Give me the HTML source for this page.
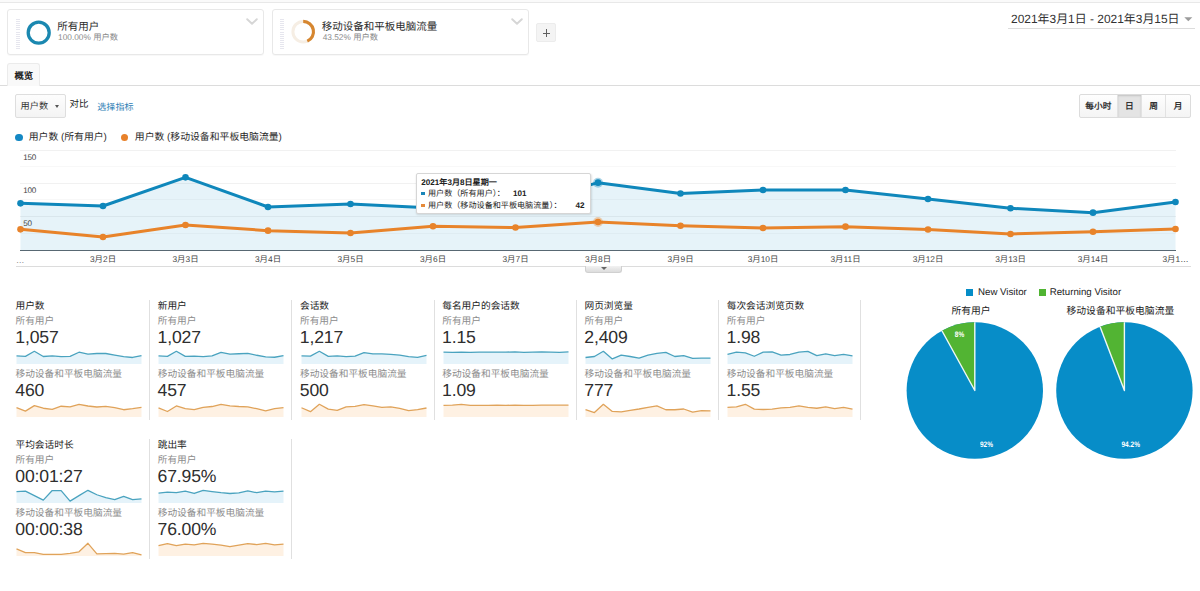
<!DOCTYPE html>
<html lang="zh-CN">
<head>
<meta charset="utf-8">
<title>Analytics</title>
<style>
*{box-sizing:border-box;margin:0;padding:0}
html,body{width:1200px;height:591px;overflow:hidden;background:#fff}
body{font-family:"Liberation Sans",sans-serif;color:#222;position:relative;font-size:10px;text-rendering:geometricPrecision}
.abs{position:absolute}
.topbar{position:absolute;left:0;top:0;width:1200px;height:3px;background:#fafafa;border-bottom:1px solid #e8e8e8}
.seg{position:absolute;top:9.3px;height:46px;width:256.5px;border:1px solid #e8e8e8;border-radius:3px;background:#fff;box-shadow:0 1px 1px rgba(0,0,0,0.03)}
.grip{position:absolute;left:7.3px;top:8.4px;width:4px;height:30px;background:repeating-linear-gradient(to bottom,#e6e6ee 0,#e6e6ee 1px,#fff 1px,#fff 2.1px)}
.seg .t{position:absolute;left:48.8px;top:10.9px;font-size:10.5px;line-height:12px;color:#2a2a2a;white-space:nowrap}
.seg .s{position:absolute;left:49.7px;top:22px;font-size:8.3px;line-height:10px;color:#8a8a8a;white-space:nowrap}
.chev{position:absolute;right:5px;top:7.8px}
.plus{position:absolute;left:536.2px;top:23.1px;width:19.8px;height:19.3px;border:1px solid #ececec;border-radius:2px;background:#f4f4f4}
.plus:before{content:"";position:absolute;left:5.6px;top:8.5px;width:7.6px;height:1.2px;background:#606060}
.plus:after{content:"";position:absolute;left:8.8px;top:5.3px;width:1.2px;height:7.6px;background:#606060}
.date{position:absolute;left:1007.5px;top:11px;width:187px;height:18.2px;border-bottom:1px solid #dcdcdc;font-size:11.95px;line-height:17px;color:#333;white-space:nowrap;padding-left:3.5px}
.tri{position:absolute;width:0;height:0;border-left:3.6px solid transparent;border-right:3.6px solid transparent;border-top:4px solid #999}
.tabline{position:absolute;left:0;top:85px;width:1200px;height:1.3px;background:#dcdcdc}
.tab{position:absolute;left:7.2px;top:63.3px;width:33px;height:23.2px;border:1px solid #ebebeb;border-bottom:none;border-radius:3px 3px 0 0;background:#f9f9f9;font-size:9.3px;font-weight:bold;line-height:25px;text-align:center;color:#222}
.btn{position:absolute;left:15px;top:94px;width:50.6px;height:24.4px;border:1px solid #dedede;border-radius:2px;background:linear-gradient(#fdfdfd,#f4f4f4);font-size:9.2px;line-height:23px;color:#333;padding-left:4.6px;white-space:nowrap}
.cmp{position:absolute;left:69.6px;top:99.1px;font-size:9.5px;line-height:12px;color:#222}
.sel{position:absolute;left:97.3px;top:100.5px;font-size:9.05px;line-height:12px;color:#2f80b5}
.bg{position:absolute;left:1079px;top:94px;height:24px;width:112px;border:1px solid #dcdcdc;border-radius:2px;background:linear-gradient(#fefefe,#f4f4f4);display:flex;font-size:8.7px;font-weight:bold;color:#333;line-height:23.2px;text-align:center;overflow:hidden}
.bg div{border-right:1px solid #e2e2e2;height:100%}
.bg div:last-child{border-right:none}
.lg{position:absolute;top:132px;font-size:9.85px;line-height:12px;color:#2a2a2a;white-space:nowrap}
.dot{position:absolute;top:133.6px;width:7.5px;height:7.5px;border-radius:50%}
.yl{position:absolute;left:23.2px;font-size:8.1px;line-height:10px;color:#444;letter-spacing:-0.2px}
.xl{position:absolute;top:254px;width:60px;text-align:center;font-size:8.4px;line-height:10px;color:#444;white-space:nowrap}
.botline{position:absolute;left:16px;top:266px;width:1175px;height:1px;background:#dcdcdc}
.handle{position:absolute;left:584.7px;top:266px;width:37px;height:6.5px;background:linear-gradient(#f2f2f2,#dcdcdc);border:1px solid #d0d0d0;border-top:none;border-radius:0 0 3px 3px}
.tip{position:absolute;left:415.6px;top:173.3px;width:175px;height:40.6px;background:#fff;border:1px solid #d6d6d6;border-radius:2px;box-shadow:0.5px 1px 2px rgba(0,0,0,0.12);font-size:8.1px;line-height:11px;color:#222;white-space:nowrap}
.tip b{font-weight:bold}
.tip .r{position:absolute}
.sq{position:absolute;width:3.7px;height:3.3px}
.card{position:absolute;width:130px;height:120px}
.card div{position:absolute;left:-0.5px;white-space:nowrap}
.ct{top:0.9px;font-size:9.7px;line-height:12px;color:#222}
.cs{font-size:9.7px;line-height:12px;color:#8c8c8c}
.cv{font-size:17.6px;line-height:20px;color:#2e2e2e;letter-spacing:-0.15px;margin-left:-0.2px}
.vd{position:absolute;width:1px;height:120px;background:#e0e0e0}
.pl{position:absolute;font-size:9.7px;line-height:12px;color:#222;white-space:nowrap}
.pt{position:absolute;top:305.7px;font-size:9.8px;line-height:12px;color:#222;white-space:nowrap;text-align:center;width:140px}
.pp{position:absolute;font-size:6.5px;line-height:8px;color:#fff;font-weight:bold;white-space:nowrap;transform:scaleY(1.22);transform-origin:50% 60%}
</style>
</head>
<body>
<div class="topbar"></div>

<div class="seg" style="left:7.4px">
  <div class="grip"></div>
  <svg class="abs" style="left:16.8px;top:8.3px" width="28" height="28" viewBox="0 0 28 28"><circle cx="13.7" cy="13.7" r="10.5" fill="none" stroke="#1b88b0" stroke-width="3.3"/></svg>
  <div class="t">所有用户</div><div class="s">100.00% 用户数</div>
  <svg class="chev" width="12" height="8" viewBox="0 0 12 8"><path d="M1.2,1.2 L6,5.8 L10.8,1.2" fill="none" stroke="#d6d6d6" stroke-width="1.9" stroke-linejoin="round" stroke-linecap="round"/></svg>
</div>
<div class="seg" style="left:272px">
  <div class="grip"></div>
  <svg class="abs" style="left:17.3px;top:8.2px" width="28" height="28" viewBox="0 0 28 28"><circle cx="13.2" cy="13.7" r="10.3" fill="none" stroke="#f6eee4" stroke-width="3"/><path d="M13.2,3.4 A10.3,10.3 0 0 1 17.3,23.15" fill="none" stroke="#d6862f" stroke-width="3.1"/></svg>
  <div class="t">移动设备和平板电脑流量</div><div class="s">43.52% 用户数</div>
  <svg class="chev" width="12" height="8" viewBox="0 0 12 8"><path d="M1.2,1.2 L6,5.8 L10.8,1.2" fill="none" stroke="#d6d6d6" stroke-width="1.9" stroke-linejoin="round" stroke-linecap="round"/></svg>
</div>
<div class="plus"></div>

<div class="date">2021年3月1日 - 2021年3月15日</div>
<svg class="abs" style="left:1180px;top:14px" width="16" height="10" viewBox="1180 14 16 10"><path d="M1184.3,17.3 L1192.3,17.3 L1188.3,21.2 Z" fill="#9c9c9c"/></svg>

<div class="tabline"></div>
<div class="tab">概览</div>

<div class="btn">用户数</div>
<div class="tri" style="left:55.3px;top:105.2px;border-left-width:2.6px;border-right-width:2.6px;border-top:3px solid #555"></div>
<div class="cmp">对比</div>
<div class="sel">选择指标</div>

<div class="bg"><div style="width:38px">每小时</div><div style="width:24.5px;background:#e4e4e4;box-shadow:inset 0 1px 2px rgba(0,0,0,0.15)">日</div><div style="width:24.5px">周</div><div style="width:24px">月</div></div>

<div class="dot" style="left:15.1px;background:#1488c4"></div><div class="lg" style="left:28.7px">用户数 (所有用户)</div>
<div class="dot" style="left:120.6px;background:#e8812a"></div><div class="lg" style="left:134.8px">用户数 (移动设备和平板电脑流量)</div>

<svg class="abs" style="left:0;top:140px" width="1200" height="140" viewBox="0 140 1200 140">
<g stroke="#f1f1f1" stroke-width="1" shape-rendering="crispEdges">
<line x1="20" y1="150.5" x2="1176" y2="150.5"/><line x1="20" y1="183.5" x2="1176" y2="183.5"/><line x1="20" y1="216.5" x2="1176" y2="216.5"/>
</g>
<g stroke="#f8f8f8" stroke-width="1" shape-rendering="crispEdges">
<line x1="20" y1="166.5" x2="1176" y2="166.5"/><line x1="20" y1="199.5" x2="1176" y2="199.5"/><line x1="20" y1="233.5" x2="1176" y2="233.5"/>
</g>
<path d="M20.5,250 L20.5,203.33 L103,206 L185.5,177.33 L268,207 L350.5,204 L433,208 L515.5,206 L598,182.67 L680.5,193.5 L763,190 L845.5,190 L928,199 L1010.5,208.27 L1093,212.67 L1175.5,202 L1175.5,250 Z" fill="#058dc7" fill-opacity="0.1"/>
<line x1="20" y1="250.5" x2="1176" y2="250.5" stroke="#586873" stroke-width="1" shape-rendering="crispEdges"/>
<polyline points="20.5,203.33 103,206 185.5,177.33 268,207 350.5,204 433,208 515.5,206 598,182.67 680.5,193.5 763,190 845.5,190 928,199 1010.5,208.27 1093,212.67 1175.5,202" fill="none" stroke="#0f87bb" stroke-width="3" stroke-linejoin="round" stroke-linecap="round"/>
<circle cx="20.5" cy="203.33" r="3.3" fill="#0f87bb"/><circle cx="103" cy="206" r="3.3" fill="#0f87bb"/><circle cx="185.5" cy="177.33" r="3.3" fill="#0f87bb"/><circle cx="268" cy="207" r="3.3" fill="#0f87bb"/><circle cx="350.5" cy="204" r="3.3" fill="#0f87bb"/><circle cx="433" cy="208" r="3.3" fill="#0f87bb"/><circle cx="515.5" cy="206" r="3.3" fill="#0f87bb"/><circle cx="598" cy="182.67" r="5" fill="#0f87bb" fill-opacity="0.35"/><circle cx="598" cy="182.67" r="3.3" fill="#0f87bb"/><circle cx="680.5" cy="193.5" r="3.3" fill="#0f87bb"/><circle cx="763" cy="190" r="3.3" fill="#0f87bb"/><circle cx="845.5" cy="190" r="3.3" fill="#0f87bb"/><circle cx="928" cy="199" r="3.3" fill="#0f87bb"/><circle cx="1010.5" cy="208.27" r="3.3" fill="#0f87bb"/><circle cx="1093" cy="212.67" r="3.3" fill="#0f87bb"/><circle cx="1175.5" cy="202" r="3.3" fill="#0f87bb"/>
<polyline points="20.5,229.33 103,237 185.5,225 268,230.67 350.5,233 433,226.27 515.5,227.5 598,222 680.5,225.73 763,228 845.5,226.67 928,229.5 1010.5,234 1093,231.73 1175.5,229" fill="none" stroke="#e8832a" stroke-width="3" stroke-linejoin="round" stroke-linecap="round"/>
<circle cx="20.5" cy="229.33" r="3.3" fill="#e8832a"/><circle cx="103" cy="237" r="3.3" fill="#e8832a"/><circle cx="185.5" cy="225" r="3.3" fill="#e8832a"/><circle cx="268" cy="230.67" r="3.3" fill="#e8832a"/><circle cx="350.5" cy="233" r="3.3" fill="#e8832a"/><circle cx="433" cy="226.27" r="3.3" fill="#e8832a"/><circle cx="515.5" cy="227.5" r="3.3" fill="#e8832a"/><circle cx="598" cy="222" r="5" fill="#e8832a" fill-opacity="0.35"/><circle cx="598" cy="222" r="3.3" fill="#e8832a"/><circle cx="680.5" cy="225.73" r="3.3" fill="#e8832a"/><circle cx="763" cy="228" r="3.3" fill="#e8832a"/><circle cx="845.5" cy="226.67" r="3.3" fill="#e8832a"/><circle cx="928" cy="229.5" r="3.3" fill="#e8832a"/><circle cx="1010.5" cy="234" r="3.3" fill="#e8832a"/><circle cx="1093" cy="231.73" r="3.3" fill="#e8832a"/><circle cx="1175.5" cy="229" r="3.3" fill="#e8832a"/>
</svg>
<div class="yl" style="top:152.6px">150</div>
<div class="yl" style="top:186px">100</div>
<div class="yl" style="top:219.4px">50</div>
<div class="xl" style="left:16px;width:auto;top:255px;color:#888">…</div>
<div class="xl" style="left:73px">3月2日</div><div class="xl" style="left:155.5px">3月3日</div><div class="xl" style="left:238px">3月4日</div><div class="xl" style="left:320.5px">3月5日</div><div class="xl" style="left:403px">3月6日</div><div class="xl" style="left:485.5px">3月7日</div><div class="xl" style="left:568px">3月8日</div><div class="xl" style="left:650.5px">3月9日</div><div class="xl" style="left:733px">3月10日</div><div class="xl" style="left:815.5px">3月11日</div><div class="xl" style="left:898px">3月12日</div><div class="xl" style="left:980.5px">3月13日</div><div class="xl" style="left:1063px">3月14日</div><div class="xl" style="left:1145.5px">3月1…</div>
<div class="botline"></div>
<div class="handle"></div>
<div class="tri" style="left:600.7px;top:267.3px;border-left-width:3px;border-right-width:3px;border-top:3px solid #666"></div>

<div class="tip">
  <div class="r" style="left:4.7px;top:2.9px"><b>2021年3月8日星期一</b></div>
  <div class="sq" style="left:4.3px;top:17.5px;background:#1a86b8"></div>
  <div class="r" style="left:11.4px;top:13.4px">用户数（所有用户）：</div>
  <div class="r" style="left:96.4px;top:13.4px"><b>101</b></div>
  <div class="sq" style="left:4.3px;top:29.8px;background:#e58a3a"></div>
  <div class="r" style="left:11.4px;top:25.5px">用户数（移动设备和平板电脑流量）：</div>
  <div class="r" style="left:158.9px;top:25.5px"><b>42</b></div>
</div>

<div class="card" style="left:16px;top:300px"><div class="ct">用户数</div><div class="cs" style="top:15.9px">所有用户</div><div class="cv" style="top:26.5px">1,057</div><svg class="abs" style="left:0;top:48px" width="127" height="17" viewBox="0 48 127 17"><path d="M0.5,64 L0.5,55.84 L9.43,56.31 L18.36,51.3 L27.29,56.48 L36.21,55.96 L45.14,56.66 L54.07,56.31 L63,52.23 L71.93,54.13 L80.86,53.51 L89.79,53.51 L98.71,55.09 L107.64,56.71 L116.57,57.48 L125.5,55.61 L125.5,64 Z" fill="#e5f3fa"/><polyline points="0.5,55.84 9.43,56.31 18.36,51.3 27.29,56.48 36.21,55.96 45.14,56.66 54.07,56.31 63,52.23 71.93,54.13 80.86,53.51 89.79,53.51 98.71,55.09 107.64,56.71 116.57,57.48 125.5,55.61" fill="none" stroke="#4aa3bf" stroke-width="1.3" stroke-linejoin="round"/></svg><div class="cs" style="top:69px">移动设备和平板电脑流量</div><div class="cv" style="top:79.5px">460</div><svg class="abs" style="left:0;top:101px" width="127" height="17" viewBox="0 101 127 17"><path d="M0.5,117 L0.5,107.63 L9.43,111.1 L18.36,105.66 L27.29,108.23 L36.21,109.29 L45.14,106.24 L54.07,106.79 L63,104.3 L71.93,105.99 L80.86,107.02 L89.79,106.42 L98.71,107.7 L107.64,109.74 L116.57,108.71 L125.5,107.47 L125.5,117 Z" fill="#fef1e3"/><polyline points="0.5,107.63 9.43,111.1 18.36,105.66 27.29,108.23 36.21,109.29 45.14,106.24 54.07,106.79 63,104.3 71.93,105.99 80.86,107.02 89.79,106.42 98.71,107.7 107.64,109.74 116.57,108.71 125.5,107.47" fill="none" stroke="#e0a35a" stroke-width="1.3" stroke-linejoin="round"/></svg></div><div class="vd" style="left:149.1px;top:300px"></div><div class="card" style="left:158.25px;top:300px"><div class="ct">新用户</div><div class="cs" style="top:15.9px">所有用户</div><div class="cv" style="top:26.5px">1,027</div><svg class="abs" style="left:0;top:48px" width="127" height="17" viewBox="0 48 127 17"><path d="M0.5,64 L0.5,55.84 L9.43,56.31 L18.36,51.3 L27.29,56.31 L36.21,56.08 L45.14,56.66 L54.07,55.84 L63,52.35 L71.93,54.1 L80.86,53.75 L89.79,53.28 L98.71,55.26 L107.64,56.78 L116.57,57.24 L125.5,55.61 L125.5,64 Z" fill="#e5f3fa"/><polyline points="0.5,55.84 9.43,56.31 18.36,51.3 27.29,56.31 36.21,56.08 45.14,56.66 54.07,55.84 63,52.35 71.93,54.1 80.86,53.75 89.79,53.28 98.71,55.26 107.64,56.78 116.57,57.24 125.5,55.61" fill="none" stroke="#4aa3bf" stroke-width="1.3" stroke-linejoin="round"/></svg><div class="cs" style="top:69px">移动设备和平板电脑流量</div><div class="cv" style="top:79.5px">457</div><svg class="abs" style="left:0;top:101px" width="127" height="17" viewBox="0 101 127 17"><path d="M0.5,117 L0.5,107.89 L9.43,111.48 L18.36,105.96 L27.29,108.72 L36.21,109.55 L45.14,107.34 L54.07,106.51 L63,104.3 L71.93,105.96 L80.86,106.51 L89.79,106.78 L98.71,108.72 L107.64,110.93 L116.57,108.72 L125.5,107.61 L125.5,117 Z" fill="#fef1e3"/><polyline points="0.5,107.89 9.43,111.48 18.36,105.96 27.29,108.72 36.21,109.55 45.14,107.34 54.07,106.51 63,104.3 71.93,105.96 80.86,106.51 89.79,106.78 98.71,108.72 107.64,110.93 116.57,108.72 125.5,107.61" fill="none" stroke="#e0a35a" stroke-width="1.3" stroke-linejoin="round"/></svg></div><div class="vd" style="left:291.35px;top:300px"></div><div class="card" style="left:300.5px;top:300px"><div class="ct">会话数</div><div class="cs" style="top:15.9px">所有用户</div><div class="cv" style="top:26.5px">1,217</div><svg class="abs" style="left:0;top:48px" width="127" height="17" viewBox="0 48 127 17"><path d="M0.5,64 L0.5,55.87 L9.43,56.08 L18.36,51.3 L27.29,56.38 L36.21,55.87 L45.14,56.68 L54.07,56.08 L63,52.62 L71.93,53.84 L80.86,53.84 L89.79,54.35 L98.71,55.06 L107.64,56.68 L116.57,57.4 L125.5,55.36 L125.5,64 Z" fill="#e5f3fa"/><polyline points="0.5,55.87 9.43,56.08 18.36,51.3 27.29,56.38 36.21,55.87 45.14,56.68 54.07,56.08 63,52.62 71.93,53.84 80.86,53.84 89.79,54.35 98.71,55.06 107.64,56.68 116.57,57.4 125.5,55.36" fill="none" stroke="#4aa3bf" stroke-width="1.3" stroke-linejoin="round"/></svg><div class="cs" style="top:69px">移动设备和平板电脑流量</div><div class="cv" style="top:79.5px">500</div><svg class="abs" style="left:0;top:101px" width="127" height="17" viewBox="0 101 127 17"><path d="M0.5,117 L0.5,107.74 L9.43,111.71 L18.36,104.3 L27.29,109.06 L36.21,110.39 L45.14,106.95 L54.07,106.42 L63,104.56 L71.93,105.89 L80.86,107.47 L89.79,106.95 L98.71,108.27 L107.64,110.65 L116.57,109.59 L125.5,108 L125.5,117 Z" fill="#fef1e3"/><polyline points="0.5,107.74 9.43,111.71 18.36,104.3 27.29,109.06 36.21,110.39 45.14,106.95 54.07,106.42 63,104.56 71.93,105.89 80.86,107.47 89.79,106.95 98.71,108.27 107.64,110.65 116.57,109.59 125.5,108" fill="none" stroke="#e0a35a" stroke-width="1.3" stroke-linejoin="round"/></svg></div><div class="vd" style="left:433.6px;top:300px"></div><div class="card" style="left:442.75px;top:300px"><div class="ct">每名用户的会话数</div><div class="cs" style="top:15.9px">所有用户</div><div class="cv" style="top:26.5px">1.15</div><svg class="abs" style="left:0;top:48px" width="127" height="17" viewBox="0 48 127 17"><path d="M0.5,64 L0.5,52.06 L9.43,52.32 L18.36,52.19 L27.29,52.32 L36.21,52.19 L45.14,52.06 L54.07,52.19 L63,52.06 L71.93,51.94 L80.86,52.32 L89.79,52.06 L98.71,51.94 L107.64,52.19 L116.57,52.32 L125.5,51.81 L125.5,64 Z" fill="#e5f3fa"/><polyline points="0.5,52.06 9.43,52.32 18.36,52.19 27.29,52.32 36.21,52.19 45.14,52.06 54.07,52.19 63,52.06 71.93,51.94 80.86,52.32 89.79,52.06 98.71,51.94 107.64,52.19 116.57,52.32 125.5,51.81" fill="none" stroke="#4aa3bf" stroke-width="1.3" stroke-linejoin="round"/></svg><div class="cs" style="top:69px">移动设备和平板电脑流量</div><div class="cv" style="top:79.5px">1.09</div><svg class="abs" style="left:0;top:101px" width="127" height="17" viewBox="0 101 127 17"><path d="M0.5,117 L0.5,105.32 L9.43,105.19 L18.36,104.3 L27.29,105.32 L36.21,105.32 L45.14,105.32 L54.07,105.19 L63,105.32 L71.93,105.19 L80.86,105.32 L89.79,105.44 L98.71,105.06 L107.64,105.19 L116.57,105.19 L125.5,105.06 L125.5,117 Z" fill="#fef1e3"/><polyline points="0.5,105.32 9.43,105.19 18.36,104.3 27.29,105.32 36.21,105.32 45.14,105.32 54.07,105.19 63,105.32 71.93,105.19 80.86,105.32 89.79,105.44 98.71,105.06 107.64,105.19 116.57,105.19 125.5,105.06" fill="none" stroke="#e0a35a" stroke-width="1.3" stroke-linejoin="round"/></svg></div><div class="vd" style="left:575.85px;top:300px"></div><div class="card" style="left:585px;top:300px"><div class="ct">网页浏览量</div><div class="cs" style="top:15.9px">所有用户</div><div class="cv" style="top:26.5px">2,409</div><svg class="abs" style="left:0;top:48px" width="127" height="17" viewBox="0 48 127 17"><path d="M0.5,64 L0.5,57.52 L9.43,56.51 L18.36,51.3 L27.29,58.92 L36.21,55.11 L45.14,56.51 L54.07,58.16 L63,55.11 L71.93,53.46 L80.86,52.32 L89.79,56.51 L98.71,55.62 L107.64,58.41 L116.57,58.16 L125.5,58.03 L125.5,64 Z" fill="#e5f3fa"/><polyline points="0.5,57.52 9.43,56.51 18.36,51.3 27.29,58.92 36.21,55.11 45.14,56.51 54.07,58.16 63,55.11 71.93,53.46 80.86,52.32 89.79,56.51 98.71,55.62 107.64,58.41 116.57,58.16 125.5,58.03" fill="none" stroke="#4aa3bf" stroke-width="1.3" stroke-linejoin="round"/></svg><div class="cs" style="top:69px">移动设备和平板电脑流量</div><div class="cv" style="top:79.5px">777</div><svg class="abs" style="left:0;top:101px" width="127" height="17" viewBox="0 101 127 17"><path d="M0.5,117 L0.5,109.51 L9.43,112.56 L18.36,104.3 L27.29,111.41 L36.21,111.92 L45.14,110.27 L54.07,109 L63,107.35 L71.93,105.95 L80.86,109.76 L89.79,109.76 L98.71,109 L107.64,112.17 L116.57,110.65 L125.5,110.9 L125.5,117 Z" fill="#fef1e3"/><polyline points="0.5,109.51 9.43,112.56 18.36,104.3 27.29,111.41 36.21,111.92 45.14,110.27 54.07,109 63,107.35 71.93,105.95 80.86,109.76 89.79,109.76 98.71,109 107.64,112.17 116.57,110.65 125.5,110.9" fill="none" stroke="#e0a35a" stroke-width="1.3" stroke-linejoin="round"/></svg></div><div class="vd" style="left:718.1px;top:300px"></div><div class="card" style="left:727.25px;top:300px"><div class="ct">每次会话浏览页数</div><div class="cs" style="top:15.9px">所有用户</div><div class="cv" style="top:26.5px">1.98</div><svg class="abs" style="left:0;top:48px" width="127" height="17" viewBox="0 48 127 17"><path d="M0.5,64 L0.5,54.48 L9.43,52.19 L18.36,52.89 L27.29,56.25 L36.21,52.19 L45.14,51.81 L54.07,55.11 L63,54.48 L71.93,52.19 L80.86,51.3 L89.79,55.62 L98.71,53.97 L107.64,55.62 L116.57,54.48 L125.5,55.87 L125.5,64 Z" fill="#e5f3fa"/><polyline points="0.5,54.48 9.43,52.19 18.36,52.89 27.29,56.25 36.21,52.19 45.14,51.81 54.07,55.11 63,54.48 71.93,52.19 80.86,51.3 89.79,55.62 98.71,53.97 107.64,55.62 116.57,54.48 125.5,55.87" fill="none" stroke="#4aa3bf" stroke-width="1.3" stroke-linejoin="round"/></svg><div class="cs" style="top:69px">移动设备和平板电脑流量</div><div class="cv" style="top:79.5px">1.55</div><svg class="abs" style="left:0;top:101px" width="127" height="17" viewBox="0 101 127 17"><path d="M0.5,117 L0.5,107.35 L9.43,106.97 L18.36,104.3 L27.29,109.13 L36.21,109.51 L45.14,109.13 L54.07,107.86 L63,107.35 L71.93,105.82 L80.86,107.35 L89.79,108.24 L98.71,106.97 L107.64,108.62 L116.57,107.35 L125.5,109.13 L125.5,117 Z" fill="#fef1e3"/><polyline points="0.5,107.35 9.43,106.97 18.36,104.3 27.29,109.13 36.21,109.51 45.14,109.13 54.07,107.86 63,107.35 71.93,105.82 80.86,107.35 89.79,108.24 98.71,106.97 107.64,108.62 116.57,107.35 125.5,109.13" fill="none" stroke="#e0a35a" stroke-width="1.3" stroke-linejoin="round"/></svg></div><div class="vd" style="left:860.35px;top:300px"></div><div class="card" style="left:16px;top:439px"><div class="ct">平均会话时长</div><div class="cs" style="top:15.9px">所有用户</div><div class="cv" style="top:26.5px">00:01:27</div><svg class="abs" style="left:0;top:48px" width="127" height="17" viewBox="0 48 127 17"><path d="M0.5,64 L0.5,52.57 L9.43,52.06 L18.36,56.63 L27.29,61.08 L36.21,51.55 L45.14,51.55 L54.07,62.09 L63,56.63 L71.93,51.3 L80.86,55.75 L89.79,58.67 L98.71,60.57 L107.64,57.4 L116.57,60.57 L125.5,59.81 L125.5,64 Z" fill="#e5f3fa"/><polyline points="0.5,52.57 9.43,52.06 18.36,56.63 27.29,61.08 36.21,51.55 45.14,51.55 54.07,62.09 63,56.63 71.93,51.3 80.86,55.75 89.79,58.67 98.71,60.57 107.64,57.4 116.57,60.57 125.5,59.81" fill="none" stroke="#4aa3bf" stroke-width="1.3" stroke-linejoin="round"/></svg><div class="cs" style="top:69px">移动设备和平板电脑流量</div><div class="cv" style="top:79.5px">00:00:38</div><svg class="abs" style="left:0;top:101px" width="127" height="17" viewBox="0 101 127 17"><path d="M0.5,117 L0.5,109.89 L9.43,113.57 L18.36,113.57 L27.29,115.35 L36.21,115.35 L45.14,115.35 L54.07,114.33 L63,112.81 L71.93,104.3 L80.86,114.84 L89.79,114.59 L98.71,114.33 L107.64,115.09 L116.57,113.57 L125.5,115.98 L125.5,117 Z" fill="#fef1e3"/><polyline points="0.5,109.89 9.43,113.57 18.36,113.57 27.29,115.35 36.21,115.35 45.14,115.35 54.07,114.33 63,112.81 71.93,104.3 80.86,114.84 89.79,114.59 98.71,114.33 107.64,115.09 116.57,113.57 125.5,115.98" fill="none" stroke="#e0a35a" stroke-width="1.3" stroke-linejoin="round"/></svg></div><div class="vd" style="left:149.1px;top:439px"></div><div class="card" style="left:158.25px;top:439px"><div class="ct">跳出率</div><div class="cs" style="top:15.9px">所有用户</div><div class="cv" style="top:26.5px">67.95%</div><svg class="abs" style="left:0;top:48px" width="127" height="17" viewBox="0 48 127 17"><path d="M0.5,64 L0.5,54.22 L9.43,53.2 L18.36,53.71 L27.29,52.06 L36.21,54.48 L45.14,51.3 L54.07,52.57 L63,53.71 L71.93,54.48 L80.86,53.97 L89.79,51.81 L98.71,53.71 L107.64,52.06 L116.57,52.95 L125.5,52.06 L125.5,64 Z" fill="#e5f3fa"/><polyline points="0.5,54.22 9.43,53.2 18.36,53.71 27.29,52.06 36.21,54.48 45.14,51.3 54.07,52.57 63,53.71 71.93,54.48 80.86,53.97 89.79,51.81 98.71,53.71 107.64,52.06 116.57,52.95 125.5,52.06" fill="none" stroke="#4aa3bf" stroke-width="1.3" stroke-linejoin="round"/></svg><div class="cs" style="top:69px">移动设备和平板电脑流量</div><div class="cv" style="top:79.5px">76.00%</div><svg class="abs" style="left:0;top:101px" width="127" height="17" viewBox="0 101 127 17"><path d="M0.5,117 L0.5,106.71 L9.43,104.55 L18.36,106.71 L27.29,105.06 L36.21,105.82 L45.14,104.3 L54.07,105.06 L63,106.2 L71.93,107.73 L80.86,106.2 L89.79,104.55 L98.71,105.57 L107.64,104.3 L116.57,105.82 L125.5,105.06 L125.5,117 Z" fill="#fef1e3"/><polyline points="0.5,106.71 9.43,104.55 18.36,106.71 27.29,105.06 36.21,105.82 45.14,104.3 54.07,105.06 63,106.2 71.93,107.73 80.86,106.2 89.79,104.55 98.71,105.57 107.64,104.3 116.57,105.82 125.5,105.06" fill="none" stroke="#e0a35a" stroke-width="1.3" stroke-linejoin="round"/></svg></div><div class="vd" style="left:291.35px;top:439px"></div>

<div class="abs" style="left:965.7px;top:289px;width:7.5px;height:7px;background:#058dc7"></div>
<div class="pl" style="left:978px;top:286.5px">New Visitor</div>
<div class="abs" style="left:1038.6px;top:289px;width:7.5px;height:7px;background:#50b432"></div>
<div class="pl" style="left:1049.7px;top:286.5px">Returning Visitor</div>
<div class="pt" style="left:901px">所有用户</div>
<div class="pt" style="left:1050.4px">移动设备和平板电脑流量</div>
<svg class="abs" style="left:890px;top:315px" width="310" height="150" viewBox="890 315 310 150"><circle cx="974.8" cy="390.5" r="68.2" fill="#078dc8"/><path d="M974.8,390.5 L941.94,330.74 A68.2,68.2 0 0 1 974.8,322.3 Z" fill="#52b433"/><path d="M941.94,330.74 L974.8,390.5 L974.8,322.3" fill="none" stroke="#fff" stroke-opacity="0.92" stroke-width="1.4" stroke-linejoin="round"/><circle cx="1124.4" cy="390.5" r="68.2" fill="#078dc8"/><path d="M1124.4,390.5 L1100.09,326.78 A68.2,68.2 0 0 1 1124.4,322.3 Z" fill="#52b433"/><path d="M1100.09,326.78 L1124.4,390.5 L1124.4,322.3" fill="none" stroke="#fff" stroke-opacity="0.92" stroke-width="1.4" stroke-linejoin="round"/></svg>
<div class="pp" style="left:954.8px;top:332.3px">8%</div>
<div class="pp" style="left:980px;top:441.5px">92%</div>
<div class="pp" style="left:1121.5px;top:441.5px">94.2%</div>
</body>
</html>
